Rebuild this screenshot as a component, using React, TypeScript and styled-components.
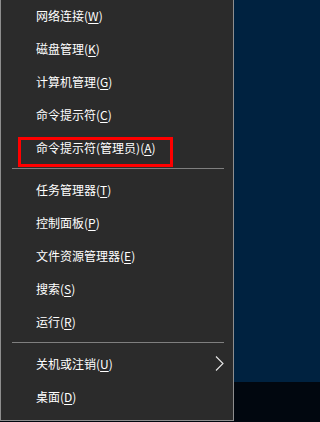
import styled, { createGlobalStyle } from 'styled-components';

const GlobalStyle = createGlobalStyle`
  html, body {
    margin: 0;
    padding: 0;
    height: 100%;
    overflow: hidden;
    background: linear-gradient(#002240 0 382px, #01070f 382px);
  }
`;

interface Item {
  label: string;
  key: string;
  submenu?: boolean;
  highlighted?: boolean;
}

const groups: Item[][] = [
  [
    { label: '网络连接', key: 'W' },
    { label: '磁盘管理', key: 'K' },
    { label: '计算机管理', key: 'G' },
    { label: '命令提示符', key: 'C' },
    { label: '命令提示符(管理员)', key: 'A', highlighted: true },
  ],
  [
    { label: '任务管理器', key: 'T' },
    { label: '控制面板', key: 'P' },
    { label: '文件资源管理器', key: 'E' },
    { label: '搜索', key: 'S' },
    { label: '运行', key: 'R' },
  ],
  [
    { label: '关机或注销', key: 'U', submenu: true },
    { label: '桌面', key: 'D' },
  ],
];

function Chevron() {
  return (
    <svg width="9" height="15" viewBox="0 0 9 15">
      <polyline points="1,0.5 8,7.5 1,14.5" fill="none" stroke="#e6e6e6" strokeWidth="1.1" />
    </svg>
  );
}

function App() {
  return (
    <>
      <GlobalStyle />
      <Menu>
        {groups.map((group, gi) => (
          <div key={gi}>
            {gi > 0 && <Separator />}
            {group.map((item) => (
              <Row key={item.label}>
                <Label>
                  {item.label}(<Key>{item.key}</Key>)
                </Label>
                {item.submenu && <Chevron />}
                {item.highlighted && <Mark />}
              </Row>
            ))}
          </div>
        ))}
      </Menu>
    </>
  );
}

const Menu = styled.div`
  box-sizing: border-box;
  width: 234px;
  margin-top: -1px;
  padding-bottom: 7px;
  background: #2b2b2b;
  border: 1px solid #8e8e8e;
  border-top: none;
  font-family: 'Noto Sans CJK SC', 'Noto Sans', sans-serif;
  font-size: 12px;
  color: #ffffff;
`;

const Row = styled.div`
  position: relative;
  display: flex;
  align-items: center;
  justify-content: space-between;
  height: 33px;
  padding: 0 9px 0 35px;
`;

const Label = styled.span`
  white-space: nowrap;
`;

const Key = styled.u`
  text-decoration-thickness: 1px;
  text-underline-offset: 2px;
`;

const Mark = styled.span`
  position: absolute;
  left: 17px;
  top: 6px;
  width: 155px;
  height: 30px;
  box-sizing: border-box;
  border: 3px solid #ff0000;
  pointer-events: none;
`;

const Separator = styled.div`
  height: 1px;
  margin: 4px 9px 4px 11px;
  background: #7f7f7f;
`;

export default App;
